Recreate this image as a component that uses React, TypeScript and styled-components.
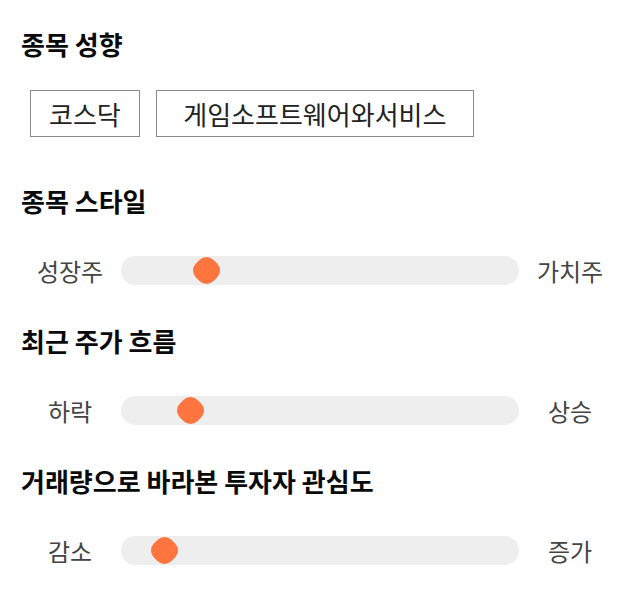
import React from "react";
import styled, { createGlobalStyle } from "styled-components";

const Global = createGlobalStyle`
  html, body { margin: 0; padding: 0; background: #fff; }
  body { font-family: "Noto Sans CJK KR", "Noto Sans", sans-serif; }
`;

const Page = styled.div`
  width: 640px;
  padding: 30px 20px 0 20px;
  box-sizing: border-box;
  display: flex;
  flex-direction: column;
`;

const Section = styled.section<{ $gap: number }>`
  display: flex;
  flex-direction: column;
  margin-top: ${(p) => p.$gap}px;
`;

const Heading = styled.h2`
  margin: -2px 0 2px 1px;
  font-size: 26px;
  line-height: 32px;
  font-weight: 700;
  color: #0a0a0a;
`;

const TagRow = styled.div`
  display: flex;
  gap: 16px;
  margin-top: 28px;
  padding-left: 10px;
`;

const Tag = styled.div<{ $padX: number }>`
  height: 47px;
  box-sizing: border-box;
  border: 1px solid #8a8a8a;
  padding: 0 ${(p) => p.$padX}px;
  display: flex;
  align-items: center;
  font-size: 26px;
  line-height: 32px;
  color: #222;
`;

const SliderRow = styled.div`
  display: flex;
  align-items: center;
  margin-top: 37px;
  height: 29px;
`;

const Label = styled.div`
  width: 100px;
  flex: none;
  text-align: center;
  font-size: 24px;
  line-height: 29px;
  color: #444;
`;

const Track = styled.div`
  position: relative;
  flex: 1;
  height: 29px;
  margin: 0 1px;
  border-radius: 15px;
  background: #eeeeee;
`;

const Thumb = styled.div`
  position: absolute;
  top: 2px;
  width: 25px;
  height: 25px;
  border-radius: 10px;
  background: #ff7540;
  transform: rotate(45deg);
`;

type SliderProps = { left: string; right: string; value: number };

const Slider = ({ left, right, value }: SliderProps) => (
  <SliderRow>
    <Label>{left}</Label>
    <Track>
      <Thumb style={{ left: `calc((100% - 29px) * ${value} + 2px)` }} />
    </Track>
    <Label>{right}</Label>
  </SliderRow>
);

export default function App() {
  return (
    <>
      <Global />
      <Page>
        <Section $gap={0}>
          <Heading>종목 성향</Heading>
          <TagRow>
            <Tag $padX={18}>코스닥</Tag>
            <Tag $padX={26.5}>게임소프트웨어와서비스</Tag>
          </TagRow>
        </Section>
        <Section $gap={50}>
          <Heading>종목 스타일</Heading>
          <Slider left="성장주" right="가치주" value={0.192} />
        </Section>
        <Section $gap={42}>
          <Heading>최근 주가 흐름</Heading>
          <Slider left="하락" right="상승" value={0.149} />
        </Section>
        <Section $gap={42}>
          <Heading>거래량으로 바라본 투자자 관심도</Heading>
          <Slider left="감소" right="증가" value={0.079} />
        </Section>
      </Page>
    </>
  );
}
